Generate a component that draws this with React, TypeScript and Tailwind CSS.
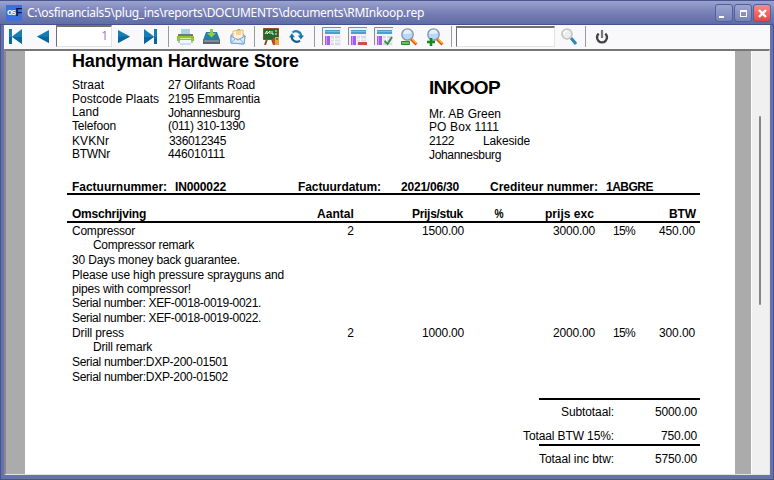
import { useLayoutEffect, useRef, useState } from "react";
import type { ReactNode } from "react";

/** Text set to a fixed advance width by spreading the difference over its letters. */
function Fit({ w, children, className = "" }: { w: number; children: string; className?: string }) {
  const ref = useRef<HTMLSpanElement>(null);
  const [spacing, setSpacing] = useState(0);
  useLayoutEffect(() => {
    const el = ref.current;
    if (!el) return;
    el.style.letterSpacing = "0px";
    const natural = el.getBoundingClientRect().width;
    const next = (w - natural) / children.length;
    el.style.letterSpacing = `${next}px`;
    setSpacing(next);
  }, [w, children]);
  return (
    <span ref={ref} className={`inline-block shrink-0 whitespace-pre ${className}`} style={{ letterSpacing: spacing }}>
      {children}
    </span>
  );
}

function Sep({ className = "" }: { className?: string }) {
  return <div className={`h-[21px] w-px shrink-0 bg-[#9a9a9c] ${className}`} />;
}

function Icon({ className, box, children }: { className: string; box: string; children: ReactNode }) {
  return (
    <svg className={`shrink-0 ${className}`} viewBox={box}>
      {children}
    </svg>
  );
}

function TableIcon({ mark, className = "" }: { mark?: "minus" | "check"; className?: string }) {
  return (
    <Icon className={`h-[19px] w-[19px] ${className}`} box="0 0 19 19">
      <path d="M0 0h19v19H0z" fill="#f2f2f6" />
      <path d="M.5 18V.5H19" fill="none" stroke="#8b8b90" />
      <path d="M3 3h15v4H3z" fill="#4a9fcf" />
      <path d="M3 4.500h15" stroke="#78bde0" />
      <path d="M3 9h5v9H3z" fill="#a45cf0" />
      <path d="M4.500 9v9" stroke="#c69bff" />
      <path d="M9 9h9v9H9z" fill="#dadbe6" />
      <path d="M9 12h9M9 15h9M12.500 9v9" stroke="#fff" />
      {mark === "minus" && <path d="M10 15h9v3h-9z" fill="#d64850" />}
      {mark === "check" && <path d="M10.500 14l3 3 4.500-7" fill="none" stroke="#329143" strokeWidth="2" />}
    </Icon>
  );
}

function ZoomIcon({ plus = false, className = "" }: { plus?: boolean; className?: string }) {
  return (
    <Icon className={`h-[18px] w-[18px] ${className}`} box="0 0 18 18">
      <path d="M11 11l5.500 5.500" stroke="#d9541c" strokeWidth="3" />
      <path d="M12 11l4.500 4.500" stroke="#ffc12e" strokeWidth="1.300" />
      <circle cx="7.500" cy="6.500" r="5.700" fill="#b4d9fb" stroke="#8a93a5" strokeWidth="1.300" />
      <path d="M3.500 6a4 4 0 0 1 8-.5z" fill="#e0f1ff" />
      {plus ? (
        <path d="M5 10v8M1 14h8" stroke="#128a1e" strokeWidth="2.600" />
      ) : (
        <path d="M1.500 13.500h8v3h-8z" fill="#69c258" stroke="#278b2a" />
      )}
    </Icon>
  );
}

function Toolbar() {
  return (
    <div className="flex h-[25px] shrink-0 items-center bg-[#f9f9fb]">
      <Icon className="ml-[5px] h-[15px] w-[13px]" box="0 0 13 15">
        <path d="M0 0h3v15H0zM13 0v15L3 7.500z" fill="#147eb5" />
        <path d="M0 8h3v7H0zM3 8h10v7z" fill="#0a669f" />
      </Icon>
      <Icon className="ml-[15px] h-[13px] w-[12px]" box="0 0 12 13">
        <path d="M12 0v13L0 6.500z" fill="#147eb5" />
        <path d="M0 6.500h12V13z" fill="#0a669f" />
      </Icon>
      <div className="-mt-px ml-[7px] flex h-[22px] w-[56px] shrink-0 justify-end border border-t-2 border-[#e3e3e3] border-t-[#707070] border-l-[#707070] bg-white pr-[3px] font-['Open_Sans',sans-serif] text-[12px] leading-[18px] text-[#9677c5]">
        1
      </div>
      <Icon className="ml-[6px] h-[13px] w-[12px]" box="0 0 12 13">
        <path d="M0 0v13l12-6.500z" fill="#147eb5" />
        <path d="M12 6.500H0V13z" fill="#0a669f" />
      </Icon>
      <Icon className="ml-[14px] h-[15px] w-[13px]" box="0 0 13 15">
        <path d="M10 0h3v15h-3zM0 0v15l10-7.500z" fill="#147eb5" />
        <path d="M10 8h3v7h-3zM10 8H0v7z" fill="#0a669f" />
      </Icon>
      <Sep className="ml-[11px]" />
      <Icon className="ml-[8px] h-[16px] w-[17px]" box="0 0 17 16">
        <path d="M4 0h9v6H4z" fill="#a9d2ec" />
        <path d="M1 5h15v2H1z" fill="#70787c" />
        <path d="M0 7h17v5H0z" fill="#8fc62c" />
        <path d="M3 9h11v1H3z" fill="#dcefa8" />
        <path d="M1 12h15v2H1z" fill="#b8c1c8" />
        <path d="M3 11h11v5H3z" fill="#eff7fd" />
        <path d="M3 15h11" stroke="#a9c9dd" />
      </Icon>
      <Icon className="ml-[9px] h-[16px] w-[17px]" box="0 0 17 16">
        <path d="M3 3h11l3 8H0z" fill="#2a7cab" />
        <path d="M0 11h17v4H0z" fill="#59666f" />
        <path d="M1 12h15" stroke="#a6b3b9" />
        <path d="M7 0h3v4h3L8.500 8.500 4 4h3z" fill="#91d32b" />
      </Icon>
      <Icon className="ml-[10px] h-[17px] w-[16px]" box="0 0 16 17">
        <path d="M1 7l8-6 6 7-1 8-13-1z" fill="#a7cbeb" stroke="#79a6d4" />
        <path d="M3 3l10-1v9H3z" fill="#fff3d9" stroke="#e2b875" />
        <path d="M6 4h5M6 6h5" stroke="#eeb252" />
        <path d="M1 8l7 4 7-4-1 8-13-1z" fill="#d7eafa" stroke="#73a5d4" />
        <path d="M1 15l5-5M14 16l-4-5" stroke="#82afd9" />
      </Icon>
      <Sep className="ml-[8px]" />
      <Icon className="ml-[8px] h-[17px] w-[17px]" box="0 0 17 17">
        <path d="M4 11l-2 6M9 11l2 6" stroke="#855120" strokeWidth="2" />
        <path d="M.5.5h15v11H.5z" fill="#23682c" stroke="#875320" />
        <path d="M2 6l2-3v3l3-3v3M9 3v3h2M12 3h2M12 6h2" fill="none" stroke="#e8f5df" />
        <path d="M10 10h2v7h-2z" fill="#c84628" />
        <path d="M12 9h4v8h-4z" fill="#e4a632" />
        <path d="M13 10h2v2h-2z" fill="#4c77a6" />
      </Icon>
      <Icon className="ml-[9px] h-[15px] w-[15px]" box="0 0 15 15">
        <path d="M3.500 3.500a5.300 5.300 0 0 1 8.700 3.500" fill="none" stroke="#1f7fb0" strokeWidth="2.200" />
        <path d="M11 11.700A5.300 5.300 0 0 1 2.600 7.500" fill="none" stroke="#125f8d" strokeWidth="2.200" />
        <path d="M8.800 6.500H15l-3.100 4z" fill="#1576ad" />
        <path d="M0 8.300h6L2.900 4.300z" fill="#1576ad" />
      </Icon>
      <Sep className="ml-[10px]" />
      <TableIcon className="ml-[7px]" />
      <TableIcon mark="minus" className="ml-[7px]" />
      <TableIcon mark="check" className="ml-[7px]" />
      <ZoomIcon className="ml-[7px]" />
      <ZoomIcon plus className="ml-[8px]" />
      <Sep className="ml-[7px]" />
      <div className="-mt-px ml-[4px] h-[21px] w-[99px] shrink-0 border border-t-2 border-[#e3e3e3] border-t-[#707070] border-l-[#707070] bg-white" />
      <Icon className="ml-[6px] h-[17px] w-[16px]" box="0 0 16 17">
        <path d="M10 10l5 6" stroke="#3484b2" strokeWidth="3" />
        <circle cx="6" cy="6" r="5" fill="#ececec" stroke="#c2c2c2" strokeWidth="1.600" />
        <path d="M3 6a3 3 0 0 1 3-3" fill="none" stroke="#fff" strokeWidth="1.500" />
      </Icon>
      <Sep className="ml-[8px]" />
      <Icon className="ml-[9px] h-[14px] w-[14px]" box="0 0 14 14">
        <path d="M3.700 3.600a5 5 0 1 0 6.600 0" fill="none" stroke="#444" strokeWidth="2.400" />
        <path d="M7 0v8" stroke="#777" strokeWidth="2.200" />
      </Icon>
    </div>
  );
}

function TitleBar() {
  return (
    <div className="flex h-[24px] shrink-0 items-center border-t border-[#4b568f] bg-linear-to-b from-[#9ba3d0] via-[#7880b5] to-[#606ca6] pl-[6px] pr-[4px]">
      <div className="flex h-[16px] w-[16px] items-center justify-center bg-[#3a70df] font-['Liberation_Sans',sans-serif] text-[9px] font-bold tracking-[-1px] text-white">
        os<span className="text-[11px] text-[#07143d]">F</span>
      </div>
      <Fit w={397} className="ml-[5px] font-['Noto_Sans',sans-serif] text-[12px] leading-[20px] text-white">
        C:\osfinancials5\plug_ins\reports\DOCUMENTS\documents\RMInkoop.rep
      </Fit>
      <div className="mt-px ml-auto flex gap-[3px]">
        <div className="flex h-[16px] w-[16px] items-end rounded-[2px] bg-linear-to-b from-[#9ea5ce] to-[#7882b7] pb-[3px] pl-[3px] outline outline-[#5360a0]">
          <div className="h-[2px] w-[5px] bg-white" />
        </div>
        <div className="flex h-[16px] w-[16px] items-center justify-center rounded-[2px] bg-linear-to-b from-[#9ea5ce] to-[#7882b7] outline outline-[#5360a0]">
          <div className="h-[7px] w-[7px] border border-t-2 border-white" />
        </div>
        <div className="flex h-[16px] w-[16px] items-center justify-center rounded-[2px] bg-linear-to-b from-[#f58b8b] to-[#e94343] outline outline-[#5360a0]">
          <svg className="h-[9px] w-[9px]" viewBox="0 0 9 9">
            <path d="M1 1l7 7M8 1l-7 7" stroke="#fff" strokeWidth="2.400" />
          </svg>
        </div>
      </div>
    </div>
  );
}

type Pair = { label: string; lw: number; value: string; vw: number; row: string; shift?: string };

const company: Pair[] = [
  { label: "Straat", lw: 32, value: "27 Olifants Road", vw: 87, row: "h-[14px]" },
  { label: "Postcode Plaats", lw: 87, value: "2195 Emmarentia", vw: 92, row: "h-[13px]" },
  { label: "Land", lw: 27, value: "Johannesburg", vw: 72, row: "h-[14px]", shift: "mt-px" },
  { label: "Telefoon", lw: 44, value: "(011) 310-1390", vw: 77, row: "h-[15px]" },
  { label: "KVKNr", lw: 37, value: "336012345", vw: 57, row: "h-[13px]", shift: "ml-px" },
  { label: "BTWNr", lw: 38, value: "446010111", vw: 57, row: "h-[14px]" },
];

type Line = {
  text: string;
  w: number;
  row: string;
  indent?: boolean;
  amounts?: [string, string, string, string, string];
};

const lines: Line[] = [
  { text: "Compressor", w: 63, row: "h-[14px]", amounts: ["2", "1500.00", "3000.00", "15%", "450.00"] },
  { text: "Compressor remark", w: 101, row: "h-[15px]", indent: true },
  { text: "30 Days money back guarantee.", w: 168, row: "h-[15px]" },
  { text: "Please use high pressure sprayguns and", w: 212, row: "h-[14px]" },
  { text: "pipes with compressor!", w: 119, row: "h-[14px]" },
  { text: "Serial number: XEF-0018-0019-0021.", w: 189, row: "h-[15px]" },
  { text: "Serial number: XEF-0018-0019-0022.", w: 189, row: "h-[15px]" },
  { text: "Drill press", w: 52, row: "h-[14px]", amounts: ["2", "1000.00", "2000.00", "15%", "300.00"] },
  { text: "Drill remark", w: 59, row: "h-[15px]", indent: true },
  { text: "Serial number:DXP-200-01501", w: 156, row: "h-[15px]" },
  { text: "Serial number:DXP-200-01502", w: 156, row: "h-[14px]" },
];

function ItemLine({ line }: { line: Line }) {
  return (
    <div className={`flex ${line.row}`}>
      <div className={`w-[233px] shrink-0 ${line.indent ? "pl-[26px]" : "pl-[5px]"}`}>
        <Fit w={line.w}>{line.text}</Fit>
      </div>
      {line.amounts && (
        <>
          <div className="w-[54px] text-right">{line.amounts[0]}</div>
          <div className="flex w-[110px] justify-end"><Fit w={42}>{line.amounts[1]}</Fit></div>
          <div className="flex w-[131px] justify-end"><Fit w={42}>{line.amounts[2]}</Fit></div>
          <div className="flex w-[40px] justify-end"><Fit w={22}>{line.amounts[3]}</Fit></div>
          <div className="flex w-[60px] justify-end"><Fit w={36}>{line.amounts[4]}</Fit></div>
        </>
      )}
    </div>
  );
}

function Total({ label, lw, value, vw, className }: { label: string; lw: number; value: string; vw: number; className: string }) {
  return (
    <div className={`flex justify-end pr-[3px] ${className}`}>
      <Fit w={lw}>{label}</Fit>
      <div className="flex w-[83px] justify-end"><Fit w={vw}>{value}</Fit></div>
    </div>
  );
}

function Report() {
  return (
    <div className="flex w-[710px] shrink-0 flex-col overflow-hidden bg-white pl-[42px] pr-[35px] text-[12px] leading-[14px] text-black">
      <div className="flex h-[128px] shrink-0">
        <div className="w-[362px] shrink-0 pl-[5px]">
          <div className="h-[27px] text-[18px] leading-[20px] font-bold">
            <Fit w={227}>Handyman Hardware Store</Fit>
          </div>
          {company.map((p) => (
            <div key={p.label} className={`flex ${p.row}`}>
              <div className="w-[96px] shrink-0"><Fit w={p.lw}>{p.label}</Fit></div>
              <Fit w={p.vw} className={p.shift}>{p.value}</Fit>
            </div>
          ))}
        </div>
        <div className="pt-[25px]">
          <div className="h-[31px] text-[19px] leading-[24px] font-bold"><Fit w={71}>INKOOP</Fit></div>
          <div className="h-[13px]"><Fit w={72}>Mr. AB Green</Fit></div>
          <div className="h-[14px]"><Fit w={70}>PO Box 1111</Fit></div>
          <div className="flex h-[14px]">
            <div className="w-[54px]"><Fit w={25}>2122</Fit></div>
            <Fit w={47}>Lakeside</Fit>
          </div>
          <div className="h-[14px]"><Fit w={72}>Johannesburg</Fit></div>
        </div>
      </div>

      <div className="flex h-[16px] shrink-0 border-b-2 border-black pt-px pl-[5px] font-bold">
        <div className="w-[103px]"><Fit w={95}>Factuurnummer:</Fit></div>
        <div className="w-[123px]"><Fit w={51}>IN000022</Fit></div>
        <div className="w-[103px]"><Fit w={83}>Factuurdatum:</Fit></div>
        <div className="w-[89px]"><Fit w={58}>2021/06/30</Fit></div>
        <div className="w-[116px]"><Fit w={108}>Crediteur nummer:</Fit></div>
        <div><Fit w={47}>1ABGRE</Fit></div>
      </div>

      <div className="mt-[12px] flex h-[16px] shrink-0 border-b-2 border-black pl-[5px] font-bold">
        <div className="w-[228px]"><Fit w={74}>Omschrijving</Fit></div>
        <div className="flex w-[54px] justify-end"><Fit w={37}>Aantal</Fit></div>
        <div className="flex w-[109px] justify-end"><Fit w={51}>Prijs/stuk</Fit></div>
        <div className="flex w-[41px] justify-end">
          <span className="inline-block origin-right scale-x-[0.85]">%</span>
        </div>
        <div className="flex w-[90px] justify-end"><Fit w={49}>prijs exc</Fit></div>
        <div className="flex w-[102px] justify-end"><Fit w={27}>BTW</Fit></div>
      </div>

      <div className="pt-px">
        {lines.map((line) => (
          <ItemLine key={line.text} line={line} />
        ))}
      </div>

      <div className="mt-[14px] ml-auto h-[2px] w-[161px] shrink-0 bg-black" />
      <Total className="mt-[5px] h-[24px]" label="Subtotaal:" lw={53} value="5000.00" vw={42} />
      <Total className="h-[15px]" label="Totaal BTW 15%:" lw={91} value="750.00" vw={36} />
      <div className="ml-auto h-[2px] w-[161px] shrink-0 bg-black" />
      <Total className="mt-[6px] h-[14px]" label="Totaal inc btw:" lw={75} value="5750.00" vw={42} />
    </div>
  );
}

export default function App() {
  return (
    <div className="flex h-[480px] w-[774px] flex-col overflow-hidden bg-[#6c77ae] font-['Liberation_Sans',Arial,sans-serif]">
      <TitleBar />
      <div className="flex h-[456px] flex-col border-r-4 border-b-[5px] border-l-4 border-[#6772ab] outline outline-[#465391] -outline-offset-1">
        <Toolbar />
        <div className="flex h-[426px] border-t-2 border-r border-b border-l-2 border-[#e3e3e3] border-t-[#777] border-l-[#898989]">
          <div className="w-[19px] shrink-0 bg-[#ababab]" />
          <Report />
          <div className="w-[16px] shrink-0 bg-[#ababab]" />
          <div className="flex w-[18px] justify-center border-l border-white bg-[#f0f0f0] pt-[65px]">
            <div className="mr-px h-[189px] w-[2px] rounded-full bg-[#858585]" />
          </div>
        </div>
      </div>
    </div>
  );
}
